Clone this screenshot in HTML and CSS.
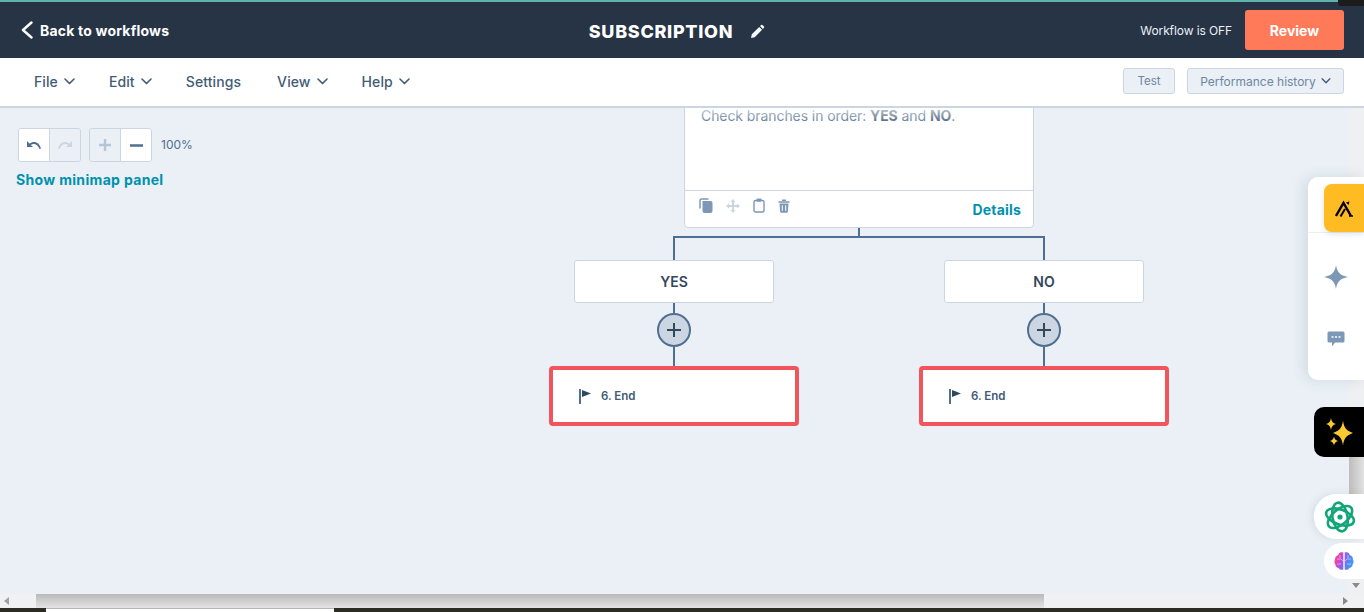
FILE: index.html
```html
<!DOCTYPE html>
<html lang="en">
<head>
    <meta charset="UTF-8">
    <title>SUBSCRIPTION - Workflow</title>
    <link rel="stylesheet" href="styles.css">
</head>
<body>
    <div class="top-strip"></div>
    <div class="corner-notch"></div>

    <header class="app-header">
        <a class="back-link">
            <svg width="13" height="18" viewBox="0 0 13 18"><path d="M11.500 1.500 3 9l8.500 7.500" fill="none" stroke="#fff" stroke-width="2.400" stroke-linecap="round" stroke-linejoin="round"/></svg>
            Back to workflows
        </a>
        <div class="title-wrap">
            <h1>SUBSCRIPTION</h1>
            <svg width="15" height="15" viewBox="0 0 15 15"><path d="M1 14l.8-3.700 7.400-7.400 2.900 2.900-7.400 7.400zM10 2.100l1.200-1.100a1 1 0 0 1 1.300 0l1.500 1.500a1 1 0 0 1 0 1.300l-1.100 1.200z" fill="#f5f8fa"/></svg>
        </div>
        <div class="header-right">
            <span class="status">Workflow is OFF</span>
            <button class="btn-review" type="button">Review</button>
        </div>
    </header>

    <nav class="menu-bar">
        <ul class="menu-list">
            <li>File <svg class="chev" width="11" height="7" viewBox="0 0 11 7"><path d="M1 1l4.500 4.500L10 1"/></svg></li>
            <li>Edit <svg class="chev" width="11" height="7" viewBox="0 0 11 7"><path d="M1 1l4.500 4.500L10 1"/></svg></li>
            <li class="menu-settings">Settings</li>
            <li>View <svg class="chev" width="11" height="7" viewBox="0 0 11 7"><path d="M1 1l4.500 4.500L10 1"/></svg></li>
            <li>Help <svg class="chev" width="11" height="7" viewBox="0 0 11 7"><path d="M1 1l4.500 4.500L10 1"/></svg></li>
        </ul>
        <div class="menu-actions">
            <button class="btn-light btn-test" type="button">Test</button>
            <button class="btn-light btn-history" type="button">Performance history <svg class="chev" width="10" height="6" viewBox="0 0 11 7"><path d="M1 1l4.500 4.500L10 1"/></svg></button>
        </div>
    </nav>

    <main class="canvas">
        <div class="zoom-row">
            <div class="btn-group">
                <button class="tool" type="button"><svg width="16" height="10" viewBox="0 0 16 10"><path d="M1 1v6h6L4.800 4.900C7.500 3 11.500 3.600 13.500 9l1.500-.6C13 1.500 7.500.5 3.500 3.500z" fill="#516f90"/></svg></button>
                <button class="tool off" type="button"><svg width="16" height="10" viewBox="0 0 16 10"><path d="M15 1v6H9l2.200-2.100C8.500 3 4.500 3.600 2.500 9L1 8.400C3 1.500 8.500.5 12.500 3.500z" fill="#cbd6e2"/></svg></button>
            </div>
            <div class="btn-group">
                <button class="tool off" type="button"><svg width="12" height="12" viewBox="0 0 12 12"><path d="M6 0v12M0 6h12" stroke="#b5c5d6" stroke-width="2.400"/></svg></button>
                <button class="tool" type="button"><svg width="13" height="3" viewBox="0 0 13 3"><path d="M0 1.500h13" stroke="#516f90" stroke-width="2.400"/></svg></button>
            </div>
            <span class="zoom-value">100%</span>
        </div>
        <a class="minimap-link">Show minimap panel</a>

        <div class="flow">
            <section class="if-card">
                <p class="if-text">Check branches in order: <b>YES</b> and <b>NO</b>.</p>
                <div class="if-foot">
                    <div class="if-icons">
                        <svg width="14" height="15" viewBox="0 0 14 15"><path d="M3.500 3h8a2 2 0 0 1 2 2v8a2 2 0 0 1-2 2h-6a2 2 0 0 1-2-2z" fill="#7c98b6"/><path d="M1 10.500V2.500A1.500 1.500 0 0 1 2.500 1h7" fill="none" stroke="#7c98b6" stroke-width="1.500"/></svg>
                        <svg width="14" height="14" viewBox="0 0 14 14"><path d="M7 0l2.500 3H8v3h3V4.500L14 7l-3 2.500V8H8v3h1.500L7 14l-2.500-3H6V8H3v1.500L0 7l3-2.500V6h3V3H4.500z" fill="#cbd6e2"/></svg>
                        <svg width="12" height="15" viewBox="0 0 12 15"><rect x="1" y="2.500" width="10" height="11.500" rx="1.500" fill="none" stroke="#7c98b6" stroke-width="1.400"/><rect x="3.500" y="0.500" width="5" height="3.200" rx="1" fill="#7c98b6"/></svg>
                        <svg width="12" height="14" viewBox="0 0 12 14"><path d="M4 1.200h4M.5 3h11" stroke="#7c98b6" stroke-width="1.500"/><path d="M1.500 4.500h9l-.6 8a1.500 1.500 0 0 1-1.500 1.300H3.600a1.500 1.500 0 0 1-1.500-1.300z" fill="#7c98b6"/><path d="M4.300 6.300v5.500M7.700 6.300v5.500" stroke="#fff" stroke-width="1"/></svg>
                    </div>
                    <a class="details-link">Details</a>
                </div>
            </section>
            <div class="stem stem-top"></div>
            <div class="branch-rail"></div>
            <div class="branches">
                <div class="branch">
                    <div class="branch-label">YES</div>
                    <div class="stem stem-short"></div>
                    <button class="add-btn" type="button"><svg width="14" height="14" viewBox="0 0 14 14"><path d="M7 0v14M0 7h14" stroke="#33475b" stroke-width="2"/></svg></button>
                    <div class="stem stem-long"></div>
                    <div class="end-node">
                        <svg width="13" height="15" viewBox="0 0 13 15"><path d="M1 0v15" stroke="#516f90" stroke-width="2"/><path d="M3 1l9 3.500L3 8z" fill="#33475b"/></svg>
                        <span>6. End</span>
                    </div>
                </div>
                <div class="branch">
                    <div class="branch-label">NO</div>
                    <div class="stem stem-short"></div>
                    <button class="add-btn" type="button"><svg width="14" height="14" viewBox="0 0 14 14"><path d="M7 0v14M0 7h14" stroke="#33475b" stroke-width="2"/></svg></button>
                    <div class="stem stem-long"></div>
                    <div class="end-node">
                        <svg width="13" height="15" viewBox="0 0 13 15"><path d="M1 0v15" stroke="#516f90" stroke-width="2"/><path d="M3 1l9 3.500L3 8z" fill="#33475b"/></svg>
                        <span>6. End</span>
                    </div>
                </div>
            </div>
        </div>
    </main>

    <div class="v-scroll"><div class="v-thumb"></div><div class="v-arrow"></div></div>

    <aside class="side-panel">
        <div class="side-top">
            <div class="side-tab">
                <svg width="18" height="17" viewBox="0 0 18 17" fill="none" stroke="#000"><path d="M1 16 8.500 3l7.500 13" stroke-width="2.400"/><path d="M5.500 16.500 10 9" stroke-width="2"/><path d="M14 16h4" stroke-width="1.500"/><path d="M11 2.500l3.500-1-1 3.500z" fill="#000" stroke="none"/></svg>
            </div>
        </div>
        <div class="side-icons">
            <svg width="24" height="24" viewBox="0 0 24 24"><path d="M12 0c1 7 4 10.500 12 12-8 1.500-11 5-12 12-1-7-4-10.500-12-12 8-1.500 11-5 12-12z" fill="#7c98b6"/></svg>
            <svg width="18" height="16" viewBox="0 0 18 16"><path d="M2 .5h14A1.500 1.500 0 0 1 17.500 2v8a1.500 1.500 0 0 1-1.500 1.500H8L5 15.500v-4H2A1.500 1.500 0 0 1 .5 10V2A1.500 1.500 0 0 1 2 .5z" fill="#7c98b6"/><path d="M4.500 6h2M8 6h2M11.500 6h2" stroke="#fff" stroke-width="1.700"/></svg>
        </div>
    </aside>

    <div class="float-tab float-black">
        <svg width="30" height="30" viewBox="0 0 30 30" fill="#fcc92f"><path d="M19 3.500c.9 7 3.300 10.200 10 12.500-6.700 2.300-9.100 5.500-10 12.500-.9-7-3.300-10.200-10-12.500 6.700-2.300 9.100-5.500 10-12.500z"/><path d="M7 1c.5 3.500 1.800 5 5 6-3.200 1-4.500 2.500-5 6-.5-3.500-1.800-5-5-6 3.200-1 4.500-2.500 5-6z"/><path d="M10 19.500c.4 2.500 1.300 3.400 4 4.500-2.700 1.100-3.600 2-4 4.500-.4-2.500-1.300-3.400-4-4.500 2.700-1.100 3.600-2 4-4.500z"/></svg>
    </div>
    <div class="float-tab float-atom">
        <svg width="32" height="32" viewBox="0 0 32 32" fill="none" stroke="#12a578" stroke-width="2.600"><ellipse cx="16" cy="16" rx="14.500" ry="7.500" transform="rotate(20 16 16)"/><ellipse cx="16" cy="16" rx="14.500" ry="7.500" transform="rotate(80 16 16)"/><ellipse cx="16" cy="16" rx="14.500" ry="7.500" transform="rotate(140 16 16)"/><circle cx="16" cy="16" r="2.600" fill="#12a578" stroke="none"/></svg>
    </div>
    <div class="float-tab float-brain">
        <svg width="20" height="20" viewBox="0 0 20 20"><defs><linearGradient id="brainFill" x1="0" x2="1" y1="0" y2="0.300"><stop offset="0" stop-color="#f56a4a"/><stop offset="0.250" stop-color="#ee3fb0"/><stop offset="0.550" stop-color="#8f5cf2"/><stop offset="1" stop-color="#3f9cf5"/></linearGradient></defs><path d="M9.300 1.500C6.500.5 4.500 2 4.300 4 2 4.500.8 6.500 1 8.500c-.8 1.500-.8 3.500.3 4.800.2 2.500 1.800 3.800 3.600 3.900.8 1.700 3 2.100 4.400 1.200zM10.700 1.500c2.800-1 4.800.5 5 2.500 2.300.5 3.500 2.500 3.300 4.500.8 1.500.8 3.500-.3 4.800-.2 2.500-1.800 3.800-3.600 3.900-.8 1.700-3 2.100-4.400 1.200z" fill="url(#brainFill)"/><path d="M3 8h4l2 2M3 13h4M17 8h-4l-2 2M17 13h-4M6 4v3M14 4v3" stroke="#fff" stroke-opacity=".6" stroke-width=".8" fill="none"/></svg>
    </div>

    <div class="h-scroll">
        <div class="h-start"><i class="arrow-left"></i></div>
        <div class="h-thumb"></div>
        <div class="h-rest"><i class="arrow-right"></i></div>
    </div>
    <div class="taskbar"><div class="task-tab"></div></div>
</body>
</html>
```

FILE: styles.css
```css
* {
    box-sizing: border-box;
}

html, body {
    height: 612px;
    margin: 0;
    overflow: hidden;
}

body {
    position: relative;
    display: flex;
    flex-direction: column;
    font-family: Inter, "Noto Sans", sans-serif;
    color: #33475b;
    background-color: #eaf0f6;
}

button {
    font-family: inherit;
    cursor: pointer;
}

.top-strip {
    height: 2px;
    background-color: #5fb3a8;
}

.corner-notch {
    position: absolute;
    top: 0;
    right: 0;
    width: 26px;
    height: 6px;
    background-color: #1c1c1c;
    border-radius: 0 0 0 3px;
}

.app-header {
    display: grid;
    grid-template-columns: 1fr auto 1fr;
    align-items: center;
    height: 56px;
    padding: 0 20px;
    background-color: #273445;
}

.back-link {
    display: flex;
    align-items: center;
    gap: 7px;
    font-size: 14px;
    font-weight: 700;
    letter-spacing: 0.2px;
    color: #fff;
}

.title-wrap {
    display: flex;
    align-items: center;
    gap: 17px;
    margin: 2px 10px 0 0;
}

.title-wrap h1 {
    margin: 0;
    font-size: 18px;
    font-weight: 800;
    letter-spacing: 0.7px;
    color: #fff;
}

.header-right {
    display: flex;
    align-items: center;
    justify-content: flex-end;
    gap: 13px;
}

.status {
    font-size: 12px;
    letter-spacing: -0.1px;
    color: #eaf0f6;
}

.btn-review {
    width: 99px;
    height: 40px;
    border: none;
    border-radius: 3px;
    background-color: #ff7a59;
    color: #fff;
    font-size: 14px;
    font-weight: 700;
}

.menu-bar {
    display: flex;
    align-items: center;
    justify-content: space-between;
    height: 50px;
    padding: 0 20px 2px 34px;
    background-color: #fff;
    border-bottom: 2px solid #cbd6e2;
}

.menu-list {
    display: flex;
    gap: 34px;
    margin: 0;
    padding: 0;
    list-style: none;
    font-size: 14px;
    font-weight: 500;
    letter-spacing: 0.1px;
    color: #425b76;
}

.menu-list li {
    display: flex;
    align-items: center;
    gap: 6px;
}

.menu-settings {
    margin-right: 2px;
}

.chev {
    fill: none;
    stroke: #425b76;
    stroke-width: 1.600;
    stroke-linecap: round;
    stroke-linejoin: round;
}

.menu-actions {
    display: flex;
    gap: 12px;
}

.btn-light {
    display: flex;
    align-items: center;
    justify-content: center;
    gap: 5px;
    height: 26px;
    border: 1px solid #cbd6e2;
    border-radius: 3px;
    background-color: #eaf0f6;
    color: #6d87a3;
    font-size: 12px;
}

.btn-test {
    width: 52px;
    font-size: 11.500px;
}

.btn-history {
    width: 157px;
}

.canvas {
    position: relative;
    flex: 1;
    padding: 20px 16px;
    overflow: hidden;
}

.zoom-row {
    display: flex;
    align-items: center;
    gap: 8px;
    margin-left: 2px;
}

.btn-group {
    display: flex;
    width: 63px;
    height: 34px;
    border: 1px solid #cbd6e2;
    border-radius: 3px;
    overflow: hidden;
}

.tool {
    display: flex;
    flex: 1;
    align-items: center;
    justify-content: center;
    padding: 0;
    border: none;
    background-color: #fff;
}

.tool + .tool {
    border-left: 1px solid #cbd6e2;
}

.tool.off {
    background-color: #eaf0f6;
}

.zoom-value {
    margin: 0 0 1px 1px;
    font-size: 12px;
    color: #516f90;
}

.minimap-link {
    display: block;
    margin-top: 9px;
    font-size: 14px;
    font-weight: 700;
    letter-spacing: 0.33px;
    color: #0091ae;
}

.flow {
    position: absolute;
    left: 549px;
    top: -40px;
    width: 620px;
    display: flex;
    flex-direction: column;
    align-items: center;
}

.if-card {
    position: relative;
    width: 350px;
    height: 160px;
    background-color: #fff;
    border: 1px solid #cbd6e2;
    border-radius: 4px;
    display: flex;
    flex-direction: column;
    justify-content: space-between;
}

.if-card::after {
    content: "";
    position: absolute;
    left: 0;
    right: 0;
    top: 39px;
    height: 16px;
    background: linear-gradient(#ffffffb0, #ffffff00);
}

.if-text {
    margin: 38px 16px 0;
    font-size: 14px;
    letter-spacing: -0.08px;
    color: #516f90;
}

.if-text b {
    color: #425b76;
}

.if-foot {
    display: flex;
    align-items: center;
    justify-content: space-between;
    height: 37px;
    padding: 0 12px 0 14px;
    border-top: 1px solid #cbd6e2;
}

.if-icons {
    display: flex;
    align-items: center;
    gap: 13px;
    margin-bottom: 7px;
}

.details-link {
    font-size: 14px;
    font-weight: 700;
    letter-spacing: 0.2px;
    color: #0091ae;
}

.stem {
    width: 2px;
    background-color: #506e91;
}

.stem-top {
    height: 8px;
}

.branch-rail {
    width: 372px;
    height: 2px;
    background-color: #506e91;
}

.branches {
    display: flex;
    gap: 120px;
}

.branch {
    display: flex;
    flex-direction: column;
    align-items: center;
    width: 250px;
}

.branch::before {
    content: "";
    width: 2px;
    height: 22px;
    background-color: #506e91;
}

.branch-label {
    display: flex;
    align-items: center;
    justify-content: center;
    width: 200px;
    height: 43px;
    background-color: #fff;
    border: 1px solid #cbd6e2;
    border-radius: 3px;
    font-size: 14px;
    font-weight: 600;
    color: #33475b;
}

.stem-short {
    height: 10px;
}

.stem-long {
    height: 19px;
}

.add-btn {
    display: flex;
    align-items: center;
    justify-content: center;
    width: 34px;
    height: 34px;
    padding: 0;
    background-color: #cbd6e2;
    border: 2px solid #506e91;
    border-radius: 50%;
}

.end-node {
    display: flex;
    align-items: center;
    gap: 9px;
    width: 250px;
    height: 60px;
    padding-left: 26px;
    background-color: #fff;
    border: 4px solid #f2545b;
    border-radius: 4px;
    font-size: 11.500px;
    font-weight: 600;
    color: #425b76;
}

.v-scroll {
    position: absolute;
    right: 0;
    top: 108px;
    width: 16px;
    height: 486px;
    background-color: #eef0f2;
}

.v-thumb {
    position: absolute;
    top: 349px;
    right: 0;
    width: 15px;
    height: 40px;
    background: linear-gradient(90deg, #bdbdbd, #e2e2e2);
}

.v-arrow {
    position: absolute;
    right: 4px;
    bottom: 6px;
    border-style: solid;
    border-width: 5px 4px 0;
    border-color: #8a8a8a transparent transparent;
}

.side-panel {
    position: absolute;
    right: 0;
    top: 177px;
    width: 56px;
    height: 203px;
    background-color: #fff;
    border-radius: 10px 0 0 10px;
    box-shadow: -4px 0 14px rgba(45, 62, 80, 0.12);
}

.side-top {
    display: flex;
    justify-content: flex-end;
    height: 56px;
    padding-top: 7px;
    border-bottom: 1px solid #eaf0f6;
}

.side-tab {
    display: flex;
    align-items: center;
    justify-content: center;
    width: 40px;
    height: 48px;
    background-color: #ffbc22;
    border-radius: 8px 0 0 8px;
    box-shadow: 0 2px 6px rgba(0, 0, 0, 0.12);
}

.side-icons {
    display: flex;
    flex-direction: column;
    align-items: center;
    gap: 42px;
    padding-top: 32px;
}

.float-tab {
    position: absolute;
    right: 0;
    display: flex;
    align-items: center;
    background-color: #fff;
}

.float-black {
    top: 407px;
    width: 50px;
    height: 50px;
    padding-left: 10px;
    background-color: #000;
    border-radius: 10px 0 0 10px;
}

.float-atom {
    top: 494px;
    width: 50px;
    height: 45px;
    padding-left: 10px;
    border-radius: 22px 0 0 22px;
    box-shadow: -2px 0 8px rgba(45, 62, 80, 0.1);
}

.float-brain {
    top: 543px;
    width: 40px;
    height: 36px;
    padding-left: 10px;
    border-radius: 18px 0 0 18px;
}

.h-scroll {
    display: flex;
    flex: none;
    height: 14px;
    background-color: #eff1f2;
}

.h-start {
    display: flex;
    align-items: center;
    width: 36px;
    padding-left: 4px;
}

.h-thumb {
    width: 1008px;
    background: linear-gradient(#b9b9b9, #e4e4e4);
}

.h-rest {
    display: flex;
    align-items: center;
    justify-content: flex-end;
    flex: 1;
    padding-right: 16px;
}

.arrow-left {
    border-style: solid;
    border-width: 4px 5px 4px 0;
    border-color: transparent #a0a0a0 transparent transparent;
}

.arrow-right {
    border-style: solid;
    border-width: 4px 0 4px 5px;
    border-color: transparent transparent transparent #8a8a8a;
}

.taskbar {
    flex: none;
    height: 4px;
    padding-left: 46px;
    background-color: #2c2c24;
}

.task-tab {
    width: 288px;
    height: 4px;
    background-color: #fff;
    border-top: 1px solid #b5b5b5;
}
```
